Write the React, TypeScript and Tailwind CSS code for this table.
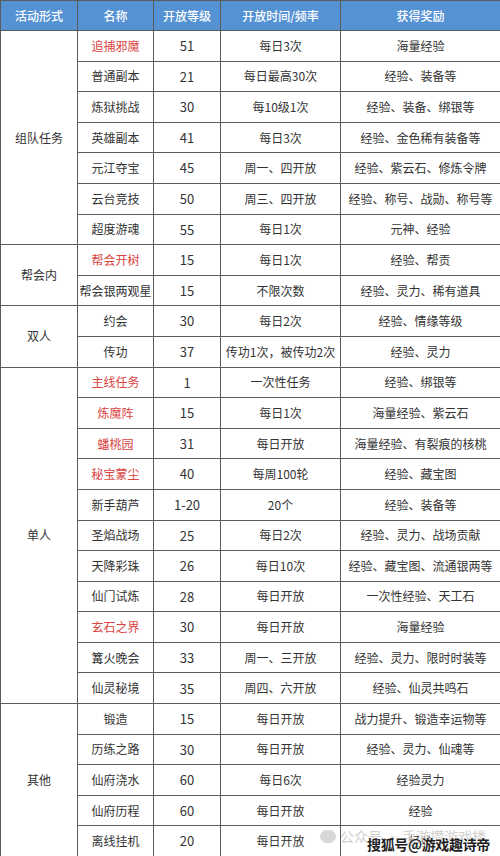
import React from 'react';

type Row = { name: string; level: string; time: string; reward: string; red?: boolean };
type Group = { label: string; rows: Row[] };

const groups: Group[] = [
  {
    label: '组队任务',
    rows: [
      { name: '追捕邪魔', level: '51', time: '每日3次', reward: '海量经验', red: true },
      { name: '普通副本', level: '21', time: '每日最高30次', reward: '经验、装备等' },
      { name: '炼狱挑战', level: '30', time: '每10级1次', reward: '经验、装备、绑银等' },
      { name: '英雄副本', level: '41', time: '每日3次', reward: '经验、金色稀有装备等' },
      { name: '元江夺宝', level: '45', time: '周一、四开放', reward: '经验、紫云石、修炼令牌' },
      { name: '云台竞技', level: '50', time: '周三、四开放', reward: '经验、称号、战勋、称号等' },
      { name: '超度游魂', level: '55', time: '每日1次', reward: '元神、经验' },
    ],
  },
  {
    label: '帮会内',
    rows: [
      { name: '帮会开树', level: '15', time: '每日1次', reward: '经验、帮贡', red: true },
      { name: '帮会银两观星', level: '15', time: '不限次数', reward: '经验、灵力、稀有道具' },
    ],
  },
  {
    label: '双人',
    rows: [
      { name: '约会', level: '30', time: '每日2次', reward: '经验、情缘等级' },
      { name: '传功', level: '37', time: '传功1次，被传功2次', reward: '经验、灵力' },
    ],
  },
  {
    label: '单人',
    rows: [
      { name: '主线任务', level: '1', time: '一次性任务', reward: '经验、绑银等', red: true },
      { name: '炼魔阵', level: '15', time: '每日1次', reward: '海量经验、紫云石', red: true },
      { name: '蟠桃园', level: '31', time: '每日开放', reward: '海量经验、有裂痕的核桃', red: true },
      { name: '秘宝蒙尘', level: '40', time: '每周100轮', reward: '经验、藏宝图', red: true },
      { name: '新手葫芦', level: '1-20', time: '20个', reward: '经验、装备等' },
      { name: '圣焰战场', level: '25', time: '每日2次', reward: '经验、灵力、战场贡献' },
      { name: '天降彩珠', level: '26', time: '每日10次', reward: '经验、藏宝图、流通银两等' },
      { name: '仙门试炼', level: '28', time: '每日开放', reward: '一次性经验、天工石' },
      { name: '玄石之界', level: '30', time: '每日开放', reward: '海量经验', red: true },
      { name: '篝火晚会', level: '33', time: '周一、三开放', reward: '经验、灵力、限时时装等' },
      { name: '仙灵秘境', level: '35', time: '周四、六开放', reward: '经验、仙灵共鸣石' },
    ],
  },
  {
    label: '其他',
    rows: [
      { name: '锻造', level: '15', time: '每日开放', reward: '战力提升、锻造幸运物等' },
      { name: '历练之路', level: '30', time: '每日开放', reward: '经验、灵力、仙魂等' },
      { name: '仙府浇水', level: '60', time: '每日6次', reward: '经验灵力' },
      { name: '仙府历程', level: '60', time: '每日开放', reward: '经验' },
      { name: '离线挂机', level: '20', time: '每日开放', reward: '经验' },
    ],
  },
];

const headers = ['活动形式', '名称', '开放等级', '开放时间/频率', '获得奖励'];

const cell = 'border border-[#5c5c5c] text-center align-middle p-0 whitespace-nowrap';

export default function App() {
  return (
    <div
      className="relative w-[500px] h-[856px] bg-white overflow-hidden text-[#333] text-[12px]"
      style={{ fontFamily: '"Noto Sans CJK SC", "Noto Sans", sans-serif' }}
    >
      <table className="w-[500px] h-[856px] table-fixed border-collapse">
        <colgroup>
          <col className="w-[77px]" />
          <col className="w-[76px]" />
          <col className="w-[67px]" />
          <col className="w-[120px]" />
          <col className="w-[160px]" />
        </colgroup>
        <thead>
          <tr className="h-[30px] bg-[#5592d4]">
            {headers.map((h) => (
              <th key={h} className={`${cell} text-white font-medium text-[12px]`}>
                {h}
              </th>
            ))}
          </tr>
        </thead>
        <tbody>
          {groups.map((g) =>
            g.rows.map((r, i) => (
              <tr key={r.name} className="h-[30.6px]">
                {i === 0 && (
                  <td rowSpan={g.rows.length} className={cell}>
                    {g.label}
                  </td>
                )}
                <td className={`${cell} ${r.red ? 'text-[#d9443f]' : ''}`}>{r.name}</td>
                <td className={`${cell} text-[13px]`}>{r.level}</td>
                <td className={cell}>{r.time}</td>
                <td className={cell}>{r.reward}</td>
              </tr>
            ))
          )}
        </tbody>
      </table>

      {/* watermarks over the last row */}
      <div className="absolute left-[320px] top-[826px] flex items-center gap-1 text-[#d0d0d0] text-[14px]">
        <span className="w-[16px] h-[13px] rounded-full bg-[#d8d8d8]" />
        <span>公众号 · 手游攒游戏楼</span>
      </div>
      <div
        className="absolute left-[367px] top-[834px] text-[#1e1e1e] text-[14px] font-bold tracking-tight"
        style={{ textShadow: '0 0 2px #fff, 0 0 2px #fff' }}
      >
        搜狐号@游戏趣诗帝
      </div>
    </div>
  );
}
